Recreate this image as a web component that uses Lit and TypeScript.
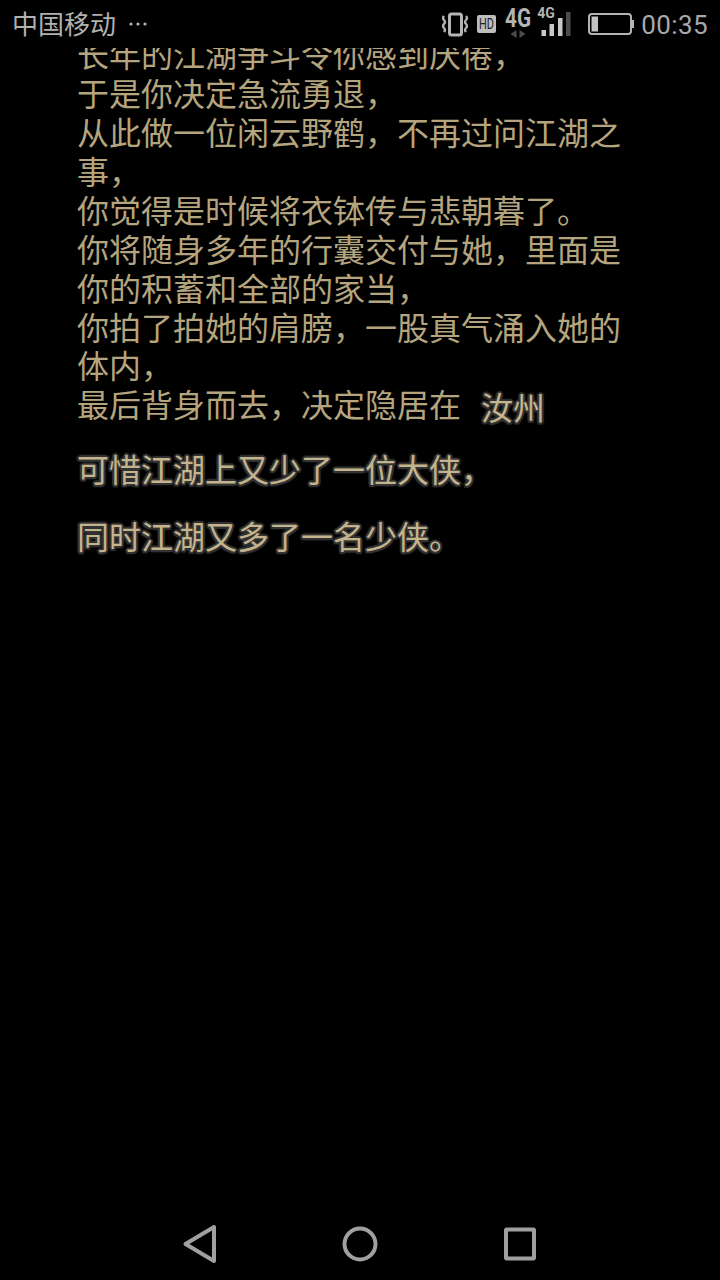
import { LitElement, html, css, svg } from "lit";
import { customElement } from "lit/decorators.js";

const plainLines = [
  "长年的江湖争斗令你感到厌倦，",
  "于是你决定急流勇退，",
  "从此做一位闲云野鹤，不再过问江湖之事，",
  "你觉得是时候将衣钵传与悲朝暮了。",
  "你将随身多年的行囊交付与她，里面是你的积蓄和全部的家当，",
  "你拍了拍她的肩膀，一股真气涌入她的体内，",
];

@customElement("app-root")
export class AppRoot extends LitElement {
  static styles = css`
    :host {
      display: flex;
      flex-direction: column;
      width: 720px;
      height: 1280px;
      background: #000;
      overflow: hidden;
      font-family: "Noto Sans CJK SC", "Noto Sans", sans-serif;
    }
    .status {
      flex: 0 0 48px;
      display: flex;
      align-items: center;
      padding: 0 12px 0 12px;
      color: #b0b0b0;
      font-size: 26px;
    }
    .carrier { line-height: 46px; margin-bottom: 2px; }
    .dots { margin-left: 12px; display: block; }
    .icons { margin-left: auto; display: block; }
    .time {
      margin-left: 5px;
      margin-top: 1px;
      font-family: Roboto, sans-serif;
      font-size: 26px;
      letter-spacing: 0.4px;
      color: #a8a8a8;
    }
    .content {
      flex: 1;
      overflow: hidden;
      padding: 0 80px 0 77px;
      color: #b5a57f;
      font-size: 32px;
      line-height: 38.9px;
    }
    .inner { margin-top: -13.8px; }
    .line { display: block; }
    .glow {
      color: #c4b48e;
      text-shadow:
        2px 0 1px #333, -2px 0 1px #333, 0 2px 1px #333, 0 -2px 1px #333,
        1.5px 1.5px 1px #333, -1.5px 1.5px 1px #333, 1.5px -1.5px 1px #333, -1.5px -1.5px 1px #333,
        0 0 4px #2a2a2a;
    }
    .place {
      display: inline-block;
      margin-left: 20px;
      position: relative;
      top: 3px;
    }
    .para { display: block; margin-top: 26px; }
    .para + .para { margin-top: 28px; }
    .nav {
      flex: 0 0 72px;
      display: flex;
      justify-content: center;
      align-items: center;
      gap: 112px;
    }
    .nav svg { display: block; }
  `;

  private statusIcons() {
    return html`<svg class="icons" width="194" height="48" viewBox="442 0 194 48">
      ${svg`
        <g fill="none" stroke="#b4b4b4">
          <rect x="449.5" y="14" width="12" height="21" rx="2" stroke-width="3"></rect>
          <path d="M444 16q-2 2 0 4t0 4t0 4t0 4M466 16q2 2 0 4t0 4t0 4t0 4" stroke-width="2.4"></path>
        </g>
        <rect x="477" y="15" width="19" height="18" rx="2" fill="#bdbdbd"></rect>
        <text x="486.5" y="29" text-anchor="middle" font-family="Roboto, sans-serif" font-size="14" fill="#222" textLength="15" lengthAdjust="spacingAndGlyphs">HD</text>
        <text x="518" y="27" text-anchor="middle" font-family="Roboto, sans-serif" font-weight="700" font-size="25" fill="#b4b4b4" textLength="26" lengthAdjust="spacingAndGlyphs">4G</text>
        <path d="M516.5 30v8l-6-4zM519.5 30v8l6-4z" fill="#4c4c4c"></path>
        <text x="546" y="18" text-anchor="middle" font-family="Roboto, sans-serif" font-weight="700" font-size="14" fill="#b4b4b4">4G</text>
        <rect x="541.5" y="30" width="4.5" height="6" fill="#c8c8c8"></rect>
        <rect x="549.5" y="24" width="4.5" height="12" fill="#c8c8c8"></rect>
        <rect x="558" y="18" width="4.5" height="18" fill="#c8c8c8"></rect>
        <rect x="566" y="12" width="4.5" height="24" fill="#4c4c4c"></rect>
        <rect x="589" y="14" width="42" height="20" rx="3" fill="none" stroke="#b4b4b4" stroke-width="2"></rect>
        <rect x="632" y="20" width="2" height="8" fill="#b4b4b4"></rect>
        <rect x="591.5" y="16.5" width="6.5" height="15" fill="#c4c4c4"></rect>
      `}
    </svg>`;
  }

  render() {
    return html`
      <div class="status">
        <span class="carrier">中国移动</span>
        <svg class="dots" width="20" height="6" viewBox="0 0 20 6" fill="#b4b4b4">
          <circle cx="3" cy="3" r="1.6"></circle>
          <circle cx="10" cy="3" r="1.6"></circle>
          <circle cx="17" cy="3" r="1.6"></circle>
        </svg>
        ${this.statusIcons()}
        <span class="time">00:35</span>
      </div>
      <div class="content">
        <div class="inner">
          ${plainLines.map((l) => html`<span class="line">${l}</span>`)}
          <span class="line">最后背身而去，决定隐居在<span class="place glow">汝州</span></span>
          <span class="para glow">可惜江湖上又少了一位大侠，</span>
          <span class="para glow">同时江湖又多了一名少侠。</span>
        </div>
      </div>
      <div class="nav">
        <svg width="48" height="48" viewBox="0 0 48 48" fill="none" stroke="#a0a0a0" stroke-width="4" stroke-linejoin="round">
          <path d="M9.5 24 L38 7 V41 Z"></path>
        </svg>
        <svg width="48" height="48" viewBox="0 0 48 48" fill="none" stroke="#a0a0a0" stroke-width="4">
          <circle cx="24" cy="24" r="15.5"></circle>
        </svg>
        <svg width="48" height="48" viewBox="0 0 48 48" fill="none" stroke="#a0a0a0" stroke-width="4" stroke-linejoin="round">
          <rect x="10" y="9.5" width="28" height="29" rx="1"></rect>
        </svg>
      </div>
    `;
  }
}
